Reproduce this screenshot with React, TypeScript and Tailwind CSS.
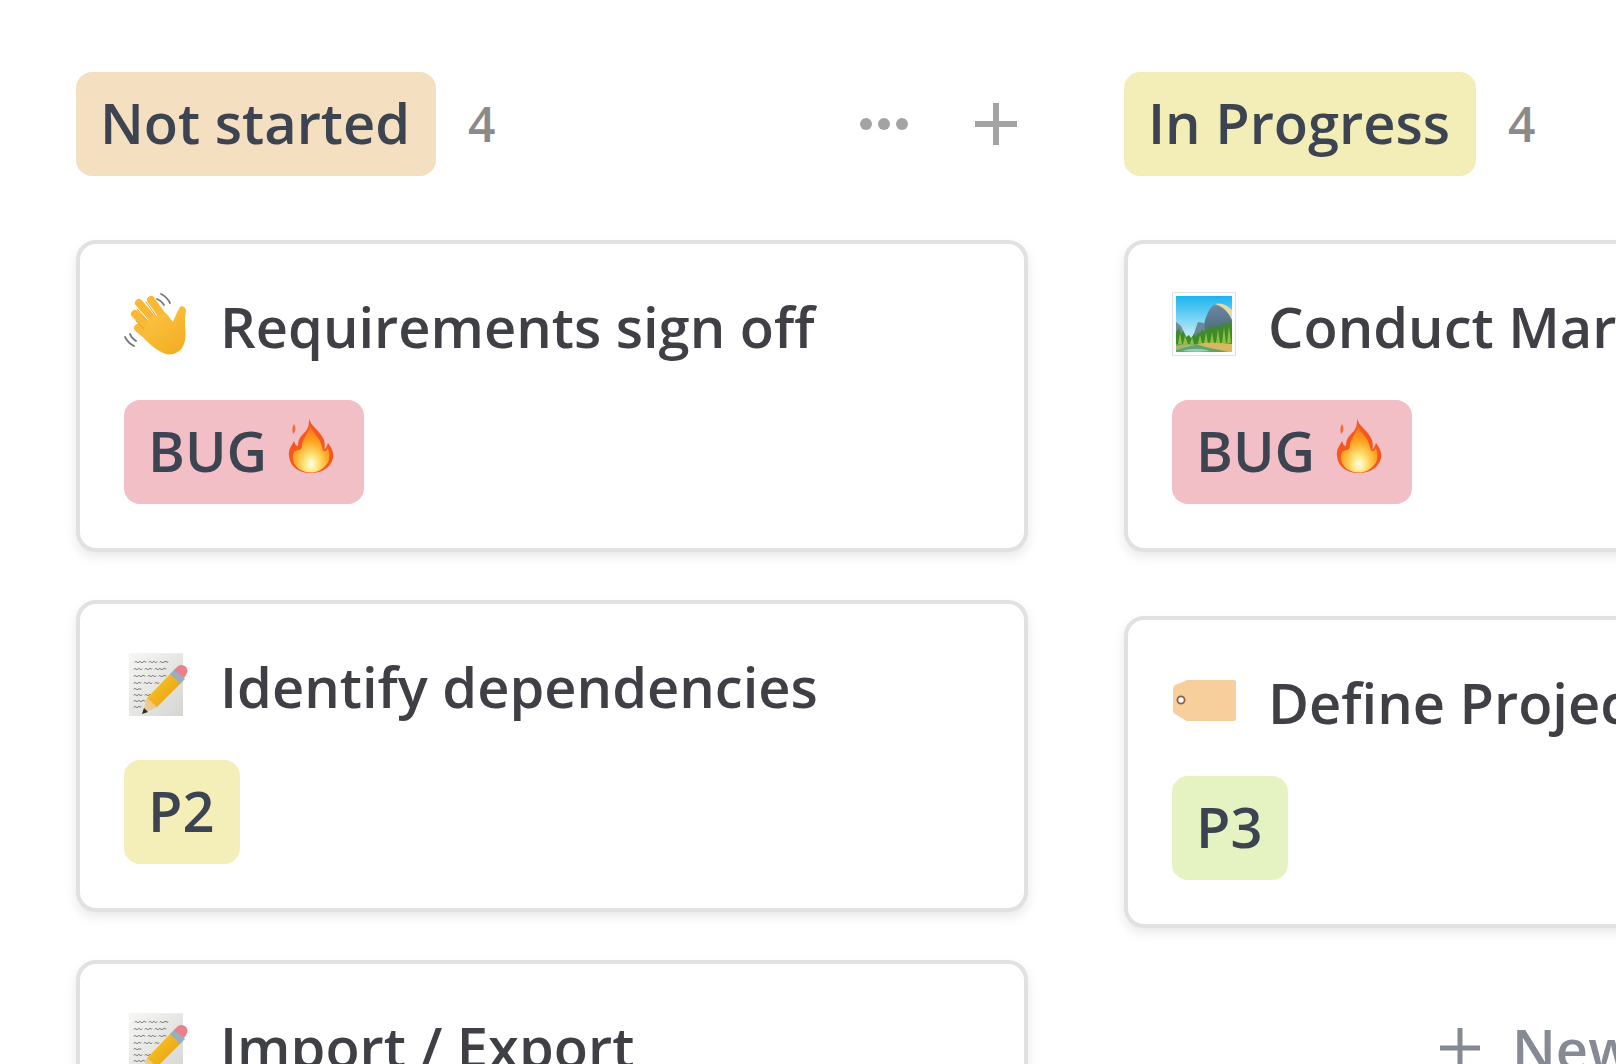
import type { ReactNode } from "react";

function WaveIcon() {
  return (
    <svg viewBox="0 0 64 64" className="size-16 shrink-0" fill="none">
      <defs>
        <linearGradient id="hand" x1="0.1" y1="0" x2="0.8" y2="1">
          <stop offset="0" stopColor="#fcc548" />
          <stop offset="1" stopColor="#f4ad22" />
        </linearGradient>
      </defs>
      <path d="M37 2c4 2 7 5 9 9M33 7c3 1 5 3 7 6M1 45c2 4 5 7 9 9M6 42c1 3 3 5 6 7" stroke="#77787a" strokeWidth="1.8" strokeLinecap="round" />
      <g stroke="#f9b934" strokeWidth="8" strokeLinecap="round">
        <path d="M27 8 42 29" />
        <path d="M15 11 33 32" />
        <path d="M11 22 30 40" />
        <path d="M14 36 28 47" />
      </g>
      <g stroke="#e59a1c" strokeWidth="1" strokeLinecap="round">
        <path d="M22 10 37 31" />
        <path d="M13 17 29 35" />
        <path d="M12 29 26 42" />
      </g>
      <path d="M24 26 42 21 49 30C51 25 53 20 56 15 58 13 62 15 62 19 61 24 61 28 61 34 62 42 62 50 58 56 54 62 45 64 39 61 31 57 24 51 18 44Z" fill="url(#hand)" />
    </svg>
  );
}

function MemoIcon() {
  return (
    <svg viewBox="0 0 64 64" className="size-16 shrink-0" fill="none">
      <defs>
        <linearGradient id="paper" x1="0" y1="0" x2="1" y2="1">
          <stop offset="0" stopColor="#f7f7f5" />
          <stop offset="1" stopColor="#d5d5d2" />
        </linearGradient>
        <linearGradient id="pencil" x1="0" y1="0" x2="1" y2="1">
          <stop offset="0" stopColor="#fbcf2e" />
          <stop offset="1" stopColor="#e59410" />
        </linearGradient>
      </defs>
      <rect x="5" y="1" width="54" height="63" fill="url(#paper)" />
      <g stroke="#3c3c3c" strokeWidth="0.7" strokeLinecap="round">
        <path d="M11 10c1-2 3 2 4 0s2 2 4 0 2 1 3 0m3 0c1-2 3 2 4 0s2 2 4 0m3 0c1-2 2 2 4 0s2 1 4 0" />
        <path d="M10 17c1-2 3 2 4 0s2 2 4 0m3 0c1-2 3 2 4 0s2 1 3 0m3 0c1-2 3 2 4 0s2 2 4 0 2 1 3 0" />
        <path d="M10 24c1-2 3 2 4 0s2 2 4 0 2 1 3 0m3 0c1-2 3 2 4 0s2 2 4 0m3 0c1-2 2 2 4 0s2 1 3 0" />
        <path d="M10 31c1-2 3 2 4 0s2 1 3 0m3 0c1-2 3 2 4 0s2 2 4 0m3 0c1-2 3 2 4 0" />
        <path d="M10 37c1-2 3 2 4 0 1 0 2 0 3 0" />
        <path d="M10 43c1-2 3 2 4 0s2 2 4 0m3 0c1-2 3 2 4 0s2 1 4 0" />
        <path d="M10 49c1-2 3 2 4 0s2 2 4 0 2 1 3 0" />
        <path d="M10 55c1-2 3 2 4 0s2 1 3 0" />
      </g>
      <path d="M21 60 23 46 47 21 57 31 33 55Z" fill="url(#pencil)" />
      <path d="M26 50 51 25" stroke="#f2b51a" strokeWidth="2.4" />
      <path d="M18 62 23 46 33 55Z" fill="#ecc98f" />
      <path d="M18 62 20 56 24 60Z" fill="#2e2b29" />
      <path d="M46 22 51 17 61 27 56 32Z" fill="#97adc0" />
      <path d="M50 18 54 14C57 12 60 13 62 15 64 17 64 20 62 23L60 26Z" fill="#e9808a" />
    </svg>
  );
}

function LandscapeIcon() {
  return (
    <svg viewBox="0 0 64 64" className="size-16 shrink-0" fill="none">
      <defs>
        <linearGradient id="sky" x1="0" y1="0" x2="0" y2="1">
          <stop offset="0" stopColor="#1cb4ef" />
          <stop offset="0.75" stopColor="#c9f0f8" />
        </linearGradient>
        <linearGradient id="rock" x1="0" y1="0" x2="0" y2="1">
          <stop offset="0" stopColor="#6c889f" />
          <stop offset="1" stopColor="#4a667a" />
        </linearGradient>
      </defs>
      <rect x="0.5" y="0.5" width="63" height="63" fill="#fbfcfc" stroke="#dfe5e6" />
      <rect x="4" y="4" width="56" height="56" fill="url(#sky)" />
      <path d="M33 28C35 22 38 15 42 13 48 12 55 15 60 20V44H30Z" fill="url(#rock)" />
      <path d="M43 12C50 10 56 14 60 18V28C57 21 52 15 43 12Z" fill="#e6dba4" />
      <path d="M21 44 26 30 32 31 34 44Z" fill="#6b8698" />
      <path d="M4 30 9 34 14 44H4Z" fill="#6f8a9a" />
      <path d="M4 52V40L7 36 9 42 11 39 14 45 17 43 19 46 22 42 24 44 26 40 28 42 30 37 32 40 34 35 36 38 38 34 40 37 42 33 44 36 46 32 48 36 50 30 52 34 54 29 56 33 58 28 60 32V52Z" fill="#3f8a2c" />
      <path d="M6 52 8 41 10 52ZM11 52 13 44 16 52ZM18 52 20 45 22 52ZM26 51 28 43 30 51ZM32 51 34 40 36 51ZM38 51 40 40 42 51ZM44 51 46 37 48 51ZM50 51 52 35 54 51ZM55 51 57 34 59 51Z" fill="#8fc03a" />
      <rect x="4" y="52" width="56" height="8" fill="#5da668" />
      <path d="M4 54C10 52 18 52 24 53 16 55 10 56 4 58Z" fill="#a9b36a" />
      <path d="M24 52C36 50 50 51 60 52V60H56C46 57 34 56 24 52Z" fill="#d9b75f" />
      <path d="M10 59C18 56 30 56 38 59 30 60 18 60 10 59Z" fill="#8fd0bd" />
    </svg>
  );
}

function TagIcon() {
  return (
    <svg viewBox="0 0 64 64" className="size-16 shrink-0" fill="none">
      <path d="M1 21C1 19 2 18 3 17L13 13C14 12 15 12 16 12H62C63 12 64 13 64 14V51C64 52 63 53 62 53H16C15 53 14 53 13 52L3 46C2 45 1 44 1 43Z" fill="#f7cf9c" />
      <circle cx="9" cy="32" r="3.6" fill="#fff" stroke="#8f5b42" strokeWidth="1.8" />
    </svg>
  );
}

function FlameIcon() {
  return (
    <svg viewBox="0 0 48 56" className="mb-2 ml-[21px] mr-[2px] h-14 w-12 shrink-0" fill="none">
      <defs>
        <radialGradient id="flameCore" cx="0.5" cy="0.82" r="0.75">
          <stop offset="0" stopColor="#fffef0" />
          <stop offset="0.25" stopColor="#ffe67a" />
          <stop offset="0.65" stopColor="#ffa31f" />
          <stop offset="1" stopColor="#f9771a" />
        </radialGradient>
      </defs>
      <path d="M21 0C22 8 32 12 36 22 37 26 37 30 36 32 38 30 39 28 40 25 44 30 46 35 45 40 43 50 33 55 23 55 11 55 2 49 1 38 0 31 4 27 6 23 7 26 8 28 10 28 10 20 14 17 18 13 21 9 21 5 21 0Z" fill="#f4581f" />
      <path d="M6 6C8 9 8 13 5 16 4 13 4 9 6 6Z" fill="#f66a2a" />
      <path d="M22 7C24 15 32 19 34 29 35 34 37 35 40 30 42 36 42 42 39 46 35 52 28 54.500 23 54.500 15 54.500 6 50 5 41 4 36 7 32 10 32 13 32 14 30 14 27 15 20 21 15 22 7Z" fill="url(#flameCore)" />
    </svg>
  );
}

function Tag({ bg, children }: { bg: string; children: ReactNode }) {
  return (
    <div className={`mt-10 inline-flex h-[104px] items-center rounded-2xl pb-1 pl-6 pr-[26px] text-[56px] font-semibold text-[#3d4451] ${bg}`}>
      {children}
    </div>
  );
}

function Card({ icon, title, tag, className = "" }: { icon: ReactNode; title: string; tag: ReactNode; className?: string }) {
  return (
    <div className={`h-[312px] rounded-[20px] border-4 border-[#e1e1e1] bg-white p-11 shadow-[0_5px_12px_rgba(0,0,0,0.09)] ${className}`}>
      <div className="flex h-[72px] items-center gap-8">
        {icon}
        <span className="whitespace-nowrap pt-1 text-[56px] font-semibold text-[#3f3f46]">{title}</span>
      </div>
      {tag}
    </div>
  );
}

function ColumnHeader({ label, bg, actions }: { label: string; bg: string; actions?: boolean }) {
  return (
    <div className="flex h-[104px] items-center">
      <div className={`flex h-full items-center rounded-2xl pb-1 pl-6 pr-[26px] text-[56px] font-semibold text-[#3d4451] ${bg}`}>{label}</div>
      <span className="ml-8 text-[48px] font-semibold text-[#8a8a8a]">4</span>
      {actions && (
        <div className="ml-auto mr-[11px] flex items-center gap-[67px]">
          <div className="flex gap-[6px]">
            <div className="size-3 rounded-full bg-[#a3a3a3]" />
            <div className="size-3 rounded-full bg-[#a3a3a3]" />
            <div className="size-3 rounded-full bg-[#a3a3a3]" />
          </div>
          <svg viewBox="0 0 42 42" className="size-[42px]" fill="none">
            <path d="M21 0V42M0 21H42" stroke="#a3a3a3" strokeWidth="6" />
          </svg>
        </div>
      )}
    </div>
  );
}

const bug = (
  <Tag bg="bg-[#f3bfc7]">
    BUG
    <FlameIcon />
  </Tag>
);

export default function App() {
  return (
    <div className="flex h-[1064px] gap-24 overflow-hidden bg-white pl-[76px] pt-[72px] font-['Open_Sans',sans-serif]">
      <div className="w-[952px] shrink-0">
        <ColumnHeader label="Not started" bg="bg-[#f4dfc0]" actions />
        <div className="mt-16 flex flex-col gap-12">
          <Card icon={<WaveIcon />} title="Requirements sign off" tag={bug} />
          <Card icon={<MemoIcon />} title="Identify dependencies" tag={<Tag bg="bg-[#f4eeb8]">P2</Tag>} />
          <Card icon={<MemoIcon />} title="Import / Export" tag={bug} />
        </div>
      </div>
      <div className="w-[952px] shrink-0">
        <ColumnHeader label="In Progress" bg="bg-[#f3eeb8]" />
        <div className="mt-16 flex flex-col gap-16">
          <Card icon={<LandscapeIcon />} title="Conduct Market Research" tag={bug} />
          <Card icon={<TagIcon />} title="Define Project Scope" tag={<Tag bg="bg-[#e5f2c1]">P3</Tag>} />
        </div>
        <div className="mt-[84px] flex h-[72px] items-center pl-[316px] text-[56px] font-semibold text-[#868a94]">
          <svg viewBox="0 0 40 40" className="size-10 shrink-0" fill="none">
            <path d="M20 0V40M0 20H40" stroke="#868a94" strokeWidth="5" />
          </svg>
          <span className="ml-8">New</span>
        </div>
      </div>
    </div>
  );
}
